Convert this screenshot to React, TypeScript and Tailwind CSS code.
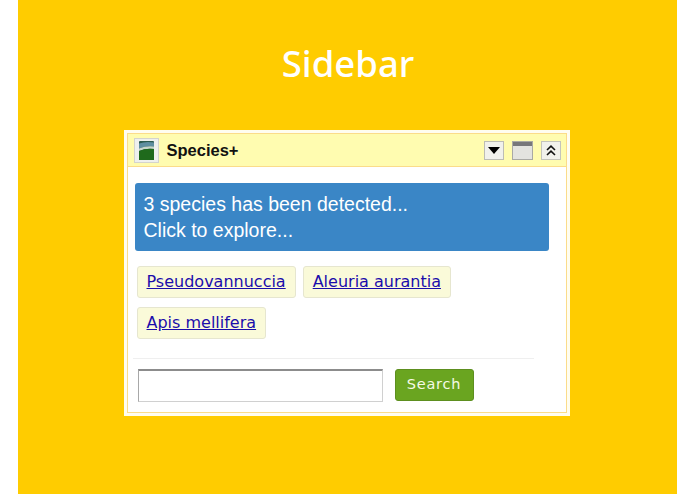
const LINKS = ['Pseudovannuccia', 'Aleuria aurantia', 'Apis mellifera'];

function Logo() {
  return (
    <div className="flex h-[25px] w-[25px] items-center justify-center border border-[#d4d4cc] bg-[#eef0ee]">
      <svg width="15" height="19" viewBox="0 0 15 19">
        <rect width="15" height="19" rx="1" fill="#2c5a4e" />
        <path d="M0 2.5 Q7 0 15 1.5 V5.5 Q7 4.5 0 7.5 Z" fill="#5f8ea0" />
        <path d="M0 7.5 Q7 4.5 15 5.5 V8 Q7 7 0 10 Z" fill="#c9d6cc" />
        <path d="M0 10 Q7 7 15 8 V19 H0 Z" fill="#1f6a1c" />
      </svg>
    </div>
  );
}

function DropdownButton() {
  return (
    <button className="flex h-[19px] w-[20px] items-center justify-center border border-[#bdbdb5] bg-[#f1f1ec]">
      <svg width="12" height="7" viewBox="0 0 12 7">
        <path d="M0 0 H12 L6 7 Z" fill="#000000" />
      </svg>
    </button>
  );
}

function WindowButton() {
  return (
    <button className="flex h-[19px] w-[21px] flex-col border border-[#a9a9a4] bg-[#e3e3df]">
      <span className="h-[4px] w-full bg-[#77777a]" />
    </button>
  );
}

function CollapseButton() {
  return (
    <button className="flex h-[19px] w-[20px] items-center justify-center border border-[#c4c4bc] bg-[#f1f1ec]">
      <svg width="10" height="11" viewBox="0 0 10 11" fill="none" stroke="#111111" strokeWidth="1.6">
        <path d="M1 5 L5 1.2 L9 5" />
        <path d="M1 10 L5 6.2 L9 10" />
      </svg>
    </button>
  );
}

export default function App() {
  return (
    <div className="h-[494px] w-[695px] bg-white px-[18px]">
      <div className="flex h-full flex-col items-center bg-[#ffcc00] pt-[39px]">
        <h1 className="ml-[1px] text-[36.5px] font-medium leading-[48px] text-white [font-family:'Noto_Sans',sans-serif]">Sidebar</h1>

        <div className="ml-[-2px] mt-[43px] w-[446px] border-[3px] border-[#fffdf0]">
          <div className="border border-[#fbdc8a] bg-white">
            <div className="flex h-[33px] items-center border-b border-[#fbdc8a] bg-[#fffcb0] pl-[6px] pr-[5px]">
              <Logo />
              <span className="ml-[8px] text-[16.5px] font-bold text-[#111111] [font-family:'Liberation_Sans',sans-serif]">Species+</span>
              <div className="ml-auto flex items-center gap-[8px]">
                <DropdownButton />
                <WindowButton />
                <CollapseButton />
              </div>
            </div>

            <div className="pb-[10px] pl-[7px] pr-[17px] pt-[16px]">
              <div className="h-[68px] rounded-[3px] bg-[#3a86c6] px-[9px] pt-[8px] text-[19.5px] leading-[26px] text-white [font-family:'Liberation_Sans',sans-serif]">
                <p>3 species has been detected...</p>
                <p>Click to explore...</p>
              </div>

              <div className="mt-[15px] flex w-[330px] flex-wrap gap-x-[7px] gap-y-[9px] pl-[2px]">
                {LINKS.map((name) => (
                  <a
                    key={name}
                    href="#"
                    className="flex h-[32px] items-center rounded-[3px] border border-[#e6e6cf] bg-[#fafad9] px-[9px] text-[16px] text-[#1a0dab] underline [font-family:'DejaVu_Sans',sans-serif]"
                  >
                    {name}
                  </a>
                ))}
              </div>

              <div className="-ml-[2px] mt-[19px] w-[401px] border-t border-[#efefef]" />

              <div className="mt-[10px] flex items-start gap-[12px] pl-[3px]">
                <input
                  type="text"
                  className="h-[33px] w-[245px] border border-[#d0d0d0] border-l-[#a8a8a8] border-t-2 border-t-[#8c8c8c] bg-white"
                />
                <button className="h-[32px] w-[79px] rounded-[3px] border border-[#5d8f1f] bg-[#6aa520] text-[14.5px] font-medium tracking-[0.8px] text-[#f6fae6] [font-family:'DejaVu_Sans',sans-serif]">
                  Search
                </button>
              </div>
            </div>
          </div>
        </div>
      </div>
    </div>
  );
}
